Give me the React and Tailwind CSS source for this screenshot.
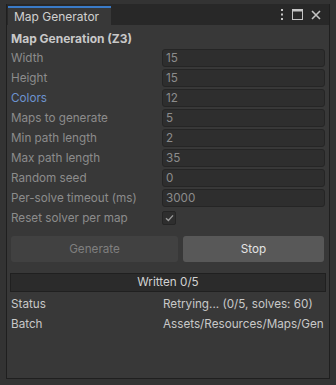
const rows = [
  { label: "Width", value: "15" },
  { label: "Height", value: "15" },
  { label: "Colors", value: "12", blue: true },
  { label: "Maps to generate", value: "5" },
  { label: "Min path length", value: "2" },
  { label: "Max path length", value: "35" },
  { label: "Random seed", value: "0" },
  { label: "Per-solve timeout (ms)", value: "3000" },
];

function Row({ label, value, blue }) {
  return (
    <div className="flex h-[18px] items-center">
      <div className={`w-[151px] shrink-0 whitespace-nowrap ${blue ? "text-[#6d93cf]" : "text-[#8c8c8c]"}`}>{label}</div>
      <div className="flex h-[18px] w-[163px] items-center rounded-[3px] border border-[#252525] bg-[#2e2e2e] px-[3px] text-[#8c8c8c]">
        {value}
      </div>
    </div>
  );
}

export default function App() {
  return (
    <div
      className="h-[385px] w-[336px] bg-[#333333] pt-[4px] pl-[6px] text-[11.7px] leading-[15px]"
      style={{ fontFamily: "Inter, 'Noto Sans', sans-serif" }}
    >
      <div className="flex h-[375px] w-[324px] flex-col border border-t-0 border-[#1f1f1f] bg-[#383838]">
        {/* tab bar */}
        <div className="flex h-[21px] items-end bg-[#282828]">
          <div className="ml-[1px] flex h-[19px] w-[103px] items-center border-t-2 border-[#3a7bc8] bg-[#383838] pl-[6px] text-[12px] text-[#d0d0d0]">
            Map Generator
          </div>
          <div className="ml-auto mr-[8px] flex h-[21px] items-center gap-[8px]">
            <svg width="4" height="11" viewBox="0 0 4 11">
              <rect x="1" y="0" width="2" height="2" fill="#c4c4c4" />
              <rect x="1" y="4.5" width="2" height="2" fill="#c4c4c4" />
              <rect x="1" y="9" width="2" height="2" fill="#c4c4c4" />
            </svg>
            <svg width="11" height="11" viewBox="0 0 11 11">
              <rect x="0.5" y="0.5" width="10" height="10" fill="none" stroke="#c4c4c4" />
              <rect x="0.5" y="0.5" width="10" height="2" fill="#c4c4c4" />
            </svg>
            <svg width="10" height="10" viewBox="0 0 10 10">
              <path d="M1 1 L9 9 M9 1 L1 9" stroke="#c4c4c4" strokeWidth="1.6" />
            </svg>
          </div>
        </div>

        <div className="flex flex-col px-[4px]">
          <div className="flex h-[24px] items-center pt-[3px] text-[12px] font-bold text-[#c8c8c8]">Map Generation (Z3)</div>
          <div className="flex flex-col gap-[2px]">
            {rows.map((r) => (
              <Row key={r.label} {...r} />
            ))}
            <div className="flex h-[18px] items-center">
              <div className="w-[151px] shrink-0 whitespace-nowrap text-[#8c8c8c]">Reset solver per map</div>
              <div className="flex h-[14px] w-[14px] items-center justify-center rounded-[2px] border border-[#252525] bg-[#2e2e2e]">
                <svg width="9" height="8" viewBox="0 0 9 8">
                  <path d="M1 4.2 L3.4 6.4 L8 1.4" fill="none" stroke="#9a9a9a" strokeWidth="1.4" />
                </svg>
              </div>
            </div>
          </div>

          <div className="mt-[9px] flex gap-[5px]">
            <div className="flex h-[26px] w-[167px] items-center justify-center rounded-[3px] bg-[#414141] text-[#7f7f7f]">
              Generate
            </div>
            <div className="flex h-[26px] w-[141px] items-center justify-center rounded-[3px] bg-[#585858] text-[#e4e4e4]">
              Stop
            </div>
          </div>

          <div className="-mx-[1px] mt-[11px] flex h-[19px] items-center justify-center border border-[#202020] bg-[#2b2b2b] text-[#d2d2d2]">
            Written 0/5
          </div>

          <div className="mt-[2px] flex h-[20px] items-center text-[#c8c8c8]">
            <div className="w-[152px] shrink-0">Status</div>
            <div className="whitespace-nowrap">Retrying... (0/5, solves: 60)</div>
          </div>
          <div className="flex h-[20px] items-center text-[#c8c8c8]">
            <div className="w-[152px] shrink-0">Batch</div>
            <div className="whitespace-nowrap">Assets/Resources/Maps/Gen</div>
          </div>
        </div>
      </div>
    </div>
  );
}
